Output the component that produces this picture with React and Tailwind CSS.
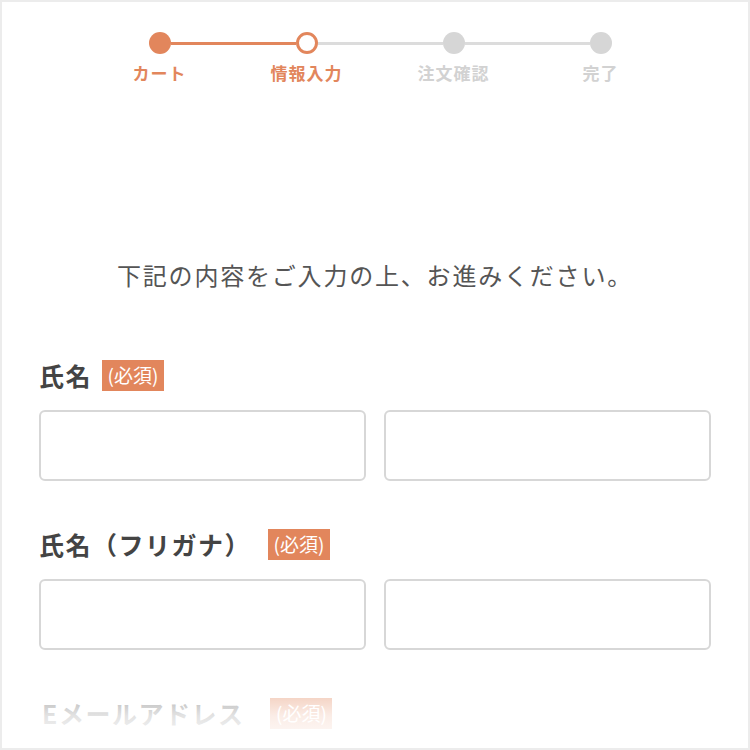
import React from 'react';

const jp = "font-['Noto_Sans_CJK_JP','Noto_Sans',sans-serif]";

const steps = [
  { label: 'カート', state: 'done' },
  { label: '情報入力', state: 'current' },
  { label: '注文確認', state: 'todo' },
  { label: '完了', state: 'todo' },
];

const orange = 'bg-[#e2865c]';

const Step = ({ step, index }) => {
  const leftActive = index <= 1;
  const rightActive = index < 1;
  const isFirst = index === 0;
  const isLast = index === steps.length - 1;
  return (
    <div className="flex flex-col items-center">
      <div className="flex h-[22px] w-full items-center">
        <div
          className={`h-[3px] flex-1 ${isFirst ? 'bg-transparent' : leftActive ? orange : 'bg-[#dcdcdc]'}`}
        />
        {step.state === 'done' && <div className={`h-[22px] w-[22px] rounded-full ${orange}`} />}
        {step.state === 'current' && (
          <div className="h-[22px] w-[22px] rounded-full border-[3px] border-[#e2865c] bg-white" />
        )}
        {step.state === 'todo' && <div className="h-[22px] w-[22px] rounded-full bg-[#d6d6d6]" />}
        <div
          className={`h-[3px] flex-1 ${isLast ? 'bg-transparent' : rightActive ? orange : 'bg-[#dcdcdc]'}`}
        />
      </div>
      <p
        className={`mt-[8px] text-[17px] font-bold leading-[22px] tracking-[0.06em] ${
          step.state === 'todo' ? 'text-[#d2d2d2]' : 'text-[#e2865c]'
        }`}
      >
        {step.label}
      </p>
    </div>
  );
};

const Badge = () => (
  <span className="inline-flex h-[31px] w-[62px] items-center justify-center bg-[#e2865c] text-[19px] font-normal text-white">
    (必須)
  </span>
);

const labelClass = 'text-[25px] font-bold leading-[32px] tracking-[0.06em] text-[#444]';

const Field = ({ label, gap = 'gap-[10px]' }) => (
  <div>
    <div className={`flex items-center ${gap}`}>
      <span className={labelClass}>{label}</span>
      <Badge />
    </div>
    <div className="mt-[19px] grid grid-cols-2 gap-[18px]">
      <input className="h-[71px] rounded-[6px] border-2 border-[#d7d7d7] bg-white px-3 outline-none" />
      <input className="h-[71px] rounded-[6px] border-2 border-[#d7d7d7] bg-white px-3 outline-none" />
    </div>
  </div>
);

export default function App() {
  return (
    <div className={`relative h-[750px] w-[750px] overflow-hidden border-2 border-[#ececec] bg-white ${jp}`}>
      <div className="ml-[84px] mt-[30px] grid w-[588px] grid-cols-4">
        {steps.map((s, i) => (
          <Step key={s.label} step={s} index={i} />
        ))}
      </div>

      <p className="mt-[173px] text-center text-[24px] leading-[36px] tracking-[0.075em] text-[#555]">
        下記の内容をご入力の上、お進みください。
      </p>

      <div className="mt-[66px] flex flex-col gap-[47px] pl-[37px] pr-[37px]">
        <Field label="氏名" />
        <Field label="氏名（フリガナ）" gap="gap-[17px]" />
        <div className="flex items-center gap-[26px] pl-[3px]">
          <span className={labelClass}>Eメールアドレス</span>
          <Badge />
        </div>
      </div>

      <div className="absolute inset-x-0 bottom-0 h-[64px] bg-linear-to-b from-white/50 via-white/85 to-white" />
    </div>
  );
}
